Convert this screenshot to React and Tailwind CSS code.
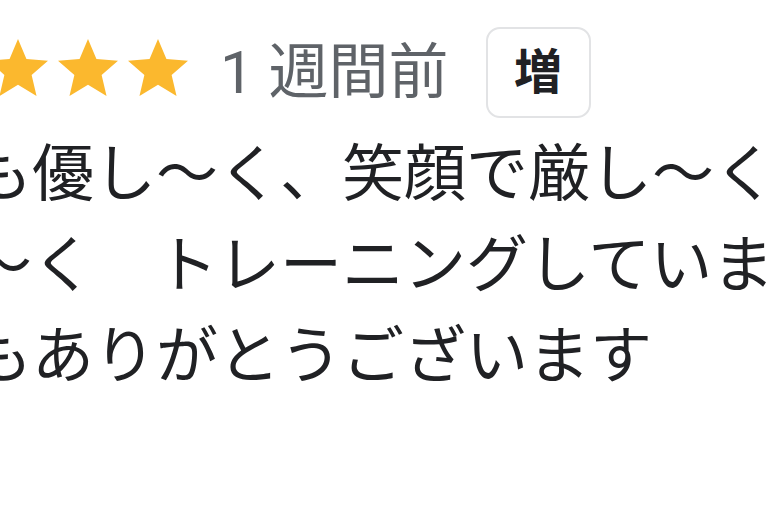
import React from 'react';

const STAR = 'M12 17.27L18.18 21l-1.64-7.03L22 9.24l-7.19-.61L12 2 9.19 8.63 2 9.24l5.46 4.73L5.82 21z';

function Star() {
    return (
        <svg viewBox="2 2 20 19" className="w-[60px] h-[57px] shrink-0" fill="#fbb82e">
            <path d={STAR} />
        </svg>
    );
}

export default function App() {
    const lines = [
        'も優し〜く、笑顔で厳し〜く',
        '〜く　トレーニングしています',
        'もありがとうございます',
    ];

    return (
        <div
            className="w-[770px] h-[510px] overflow-hidden bg-white"
            style={{ fontFamily: 'Roboto, "Noto Sans CJK JP", sans-serif' }}
        >
            <div className="flex items-center h-[91px] mt-[27px] ml-[-12px]">
                <div className="flex gap-[10px] -mt-[10px]">
                    <Star />
                    <Star />
                    <Star />
                </div>
                <span className="ml-[32px] text-[60px] leading-[88px] text-[#5f6368] whitespace-nowrap">
                    1 週間前
                </span>
                <div className="ml-[37px] w-[105px] h-[91px] rounded-[14px] border-2 border-[#e2e3e5] flex items-center justify-center">
                    <span className="text-[48px] font-bold text-[#202124] leading-none">増</span>
                </div>
            </div>

            <div className="mt-[11px] ml-[-30px] text-[62px] leading-[91px] text-[#202124]">
                {lines.map(line => (
                    <div key={line} className="whitespace-pre">{line}</div>
                ))}
            </div>
        </div>
    );
}
